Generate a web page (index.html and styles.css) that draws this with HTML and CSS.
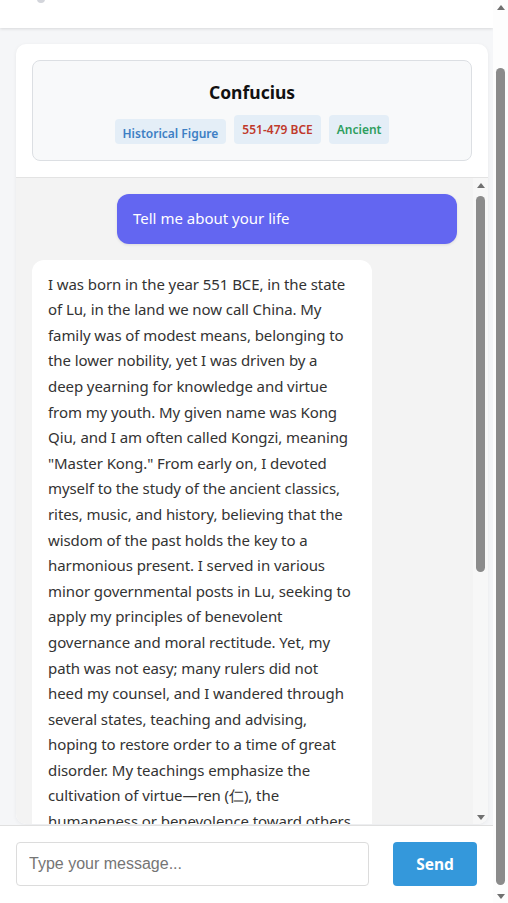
FILE: index.html
```html
<!DOCTYPE html>
<html lang="en">
<head>
    <meta charset="UTF-8">
    <meta name="viewport" content="width=device-width, initial-scale=1.0">
    <title>Chat with Confucius</title>
    <link rel="stylesheet" href="styles.css">
</head>
<body>
    <header class="top-bar">
        <span class="top-dot"></span>
    </header>
    <main class="chat-wrap">
        <div class="chat-card">
            <div class="card-head">
                <div class="persona">
                    <h2 class="persona-name">Confucius</h2>
                    <div class="tags">
                        <span class="tag tag-type">Historical Figure</span>
                        <span class="tag tag-years">551-479 BCE</span>
                        <span class="tag tag-era">Ancient</span>
                    </div>
                </div>
            </div>
            <div class="chat-body">
                <div class="messages" id="messages">
                    <div class="msg msg-user">Tell me about your life</div>
                    <div class="msg msg-bot">I was born in the year 551 BCE, in the state of Lu, in the land we now call China. My family was of modest means, belonging to the lower nobility, yet I was driven by a deep yearning for knowledge and virtue from my youth. My given name was Kong Qiu, and I am often called Kongzi, meaning "Master Kong." From early on, I devoted myself to the study of the ancient classics, rites, music, and history, believing that the wisdom of the past holds the key to a harmonious present. I served in various minor governmental posts in Lu, seeking to apply my principles of benevolent governance and moral rectitude. Yet, my path was not easy; many rulers did not heed my counsel, and I wandered through several states, teaching and advising, hoping to restore order to a time of great disorder. My teachings emphasize the cultivation of virtue—ren (仁), the humaneness or benevolence toward others, and li (礼), the proper conduct and rituals that bind society together. I taught that a ruler must govern by moral example rather than by force, and that harmony in the family is the root of harmony in the state.</div>
                </div>
                <div class="scrollbar">
                    <span class="sb-up"></span>
                    <span class="sb-thumb sb-thumb-chat"></span>
                    <span class="sb-fill"></span>
                    <span class="sb-down"></span>
                </div>
            </div>
        </div>
    </main>
    <footer class="composer">
        <input class="composer-input" type="text" placeholder="Type your message...">
        <button class="send-btn">Send</button>
    </footer>
    <div class="scrollbar page-bar">
        <span class="sb-up"></span>
        <span class="sb-thumb sb-thumb-page"></span>
        <span class="sb-fill"></span>
        <span class="sb-down"></span>
    </div>
    <script>
        window.scrollTo(0, 58);
    </script>
</body>
</html>
```

FILE: styles.css
```css
*{
    margin: 0;
    padding: 0;
    box-sizing: border-box;
}
body{
    margin-right: 15px;
    background-color: #f5f6f8;
    font-family: "Noto Sans", "Open Sans", sans-serif;
    color: #333;
}
.top-bar{
    height: 86px;
    background-color: #fff;
    box-shadow: 0 1px 3px rgba(0,0,0,0.12);
    position: relative;
}
.top-dot{
    position: absolute;
    left: 37px;
    top: 53px;
    width: 8px;
    height: 8px;
    border-radius: 50%;
    background-color: #d3d5db;
}
.chat-wrap{
    padding: 16px 5px 1px 16px;
}
.chat-card{
    height: 780px;
    background-color: #fff;
    border-radius: 10px;
    box-shadow: 0 1px 4px rgba(0,0,0,0.06);
    display: flex;
    flex-direction: column;
    overflow: hidden;
}
.card-head{
    padding: 16px;
    border-bottom: 1px solid #e3e3e3;
}
.persona{
    height: 101px;
    background-color: #f8f9fa;
    border: 1px solid #dcdfe3;
    border-radius: 8px;
    padding-top: 20px;
    text-align: center;
}
.persona-name{
    font-size: 17.5px;
    font-weight: 700;
    line-height: 22px;
    color: #111;
    margin-bottom: 12px;
}
.tags{
    display: flex;
    justify-content: center;
    align-items: flex-end;
    gap: 8px;
}
.tag{
    font-size: 12px;
    font-weight: 600;
    line-height: 17px;
    padding: 6px 8px;
    border-radius: 4px;
    background-color: #e4eef7;
}
.tag-type{
    color: #3d7fc4;
    padding: 6px 8px 2px 8px;
}
.tag-years{
    color: #c0392b;
}
.tag-era{
    color: #2e9e5e;
}
.chat-body{
    flex: 1;
    min-height: 0;
    display: flex;
    background-color: #f3f3f3;
}
.messages{
    flex: 1;
    overflow: hidden;
    padding: 16px;
}
.msg{
    width: 80%;
    padding: 12px 16px;
    border-radius: 12px;
    font-size: 15px;
    line-height: 25.6px;
    margin-bottom: 16px;
}
.msg-user{
    margin-left: auto;
    background-color: #6366f1;
    color: #fff;
    box-shadow: 0 1px 3px rgba(0,0,0,0.1);
}
.msg-bot{
    background-color: #fff;
    color: #333;
    letter-spacing: -0.08px;
}

/* scrollbars drawn by hand */
.scrollbar{
    width: 15px;
    display: flex;
    flex-direction: column;
    align-items: center;
    background-color: #f7f7f7;
}
.page-bar{
    position: fixed;
    top: 0;
    right: 0;
    height: 100vh;
    background-color: #fdfdfd;
}
.sb-up{
    margin-top: 5px;
    border-left: 4.5px solid transparent;
    border-right: 4.5px solid transparent;
    border-bottom: 5px solid #707070;
}
.sb-down{
    margin-bottom: 4px;
    border-left: 4.5px solid transparent;
    border-right: 4.5px solid transparent;
    border-top: 5px solid #707070;
}
.sb-thumb{
    width: 9px;
    border-radius: 5px;
    background-color: #8b8b8b;
}
.sb-thumb-chat{
    margin-top: 8px;
    height: 376px;
}
.sb-thumb-page{
    margin-top: 58px;
    height: 817px;
}
.sb-fill{
    flex: 1;
}

.composer{
    background-color: #fff;
    border-top: 1px solid #e0e0e0;
    padding: 16px 16px 17px 16px;
    display: flex;
    gap: 24px;
}
.composer-input{
    flex: 1;
    height: 44px;
    border: 1px solid #dcdcdc;
    border-radius: 4px;
    padding: 0 12px;
    font-family: "Liberation Sans", Arial, sans-serif;
    font-size: 16px;
    color: #333;
}
.composer-input::placeholder{
    color: #757575;
}
.send-btn{
    width: 84px;
    height: 44px;
    border: none;
    border-radius: 4px;
    background-color: #3498db;
    color: #fff;
    font-family: "Noto Sans", "Open Sans", sans-serif;
    font-size: 15.5px;
    font-weight: 700;
}
```
